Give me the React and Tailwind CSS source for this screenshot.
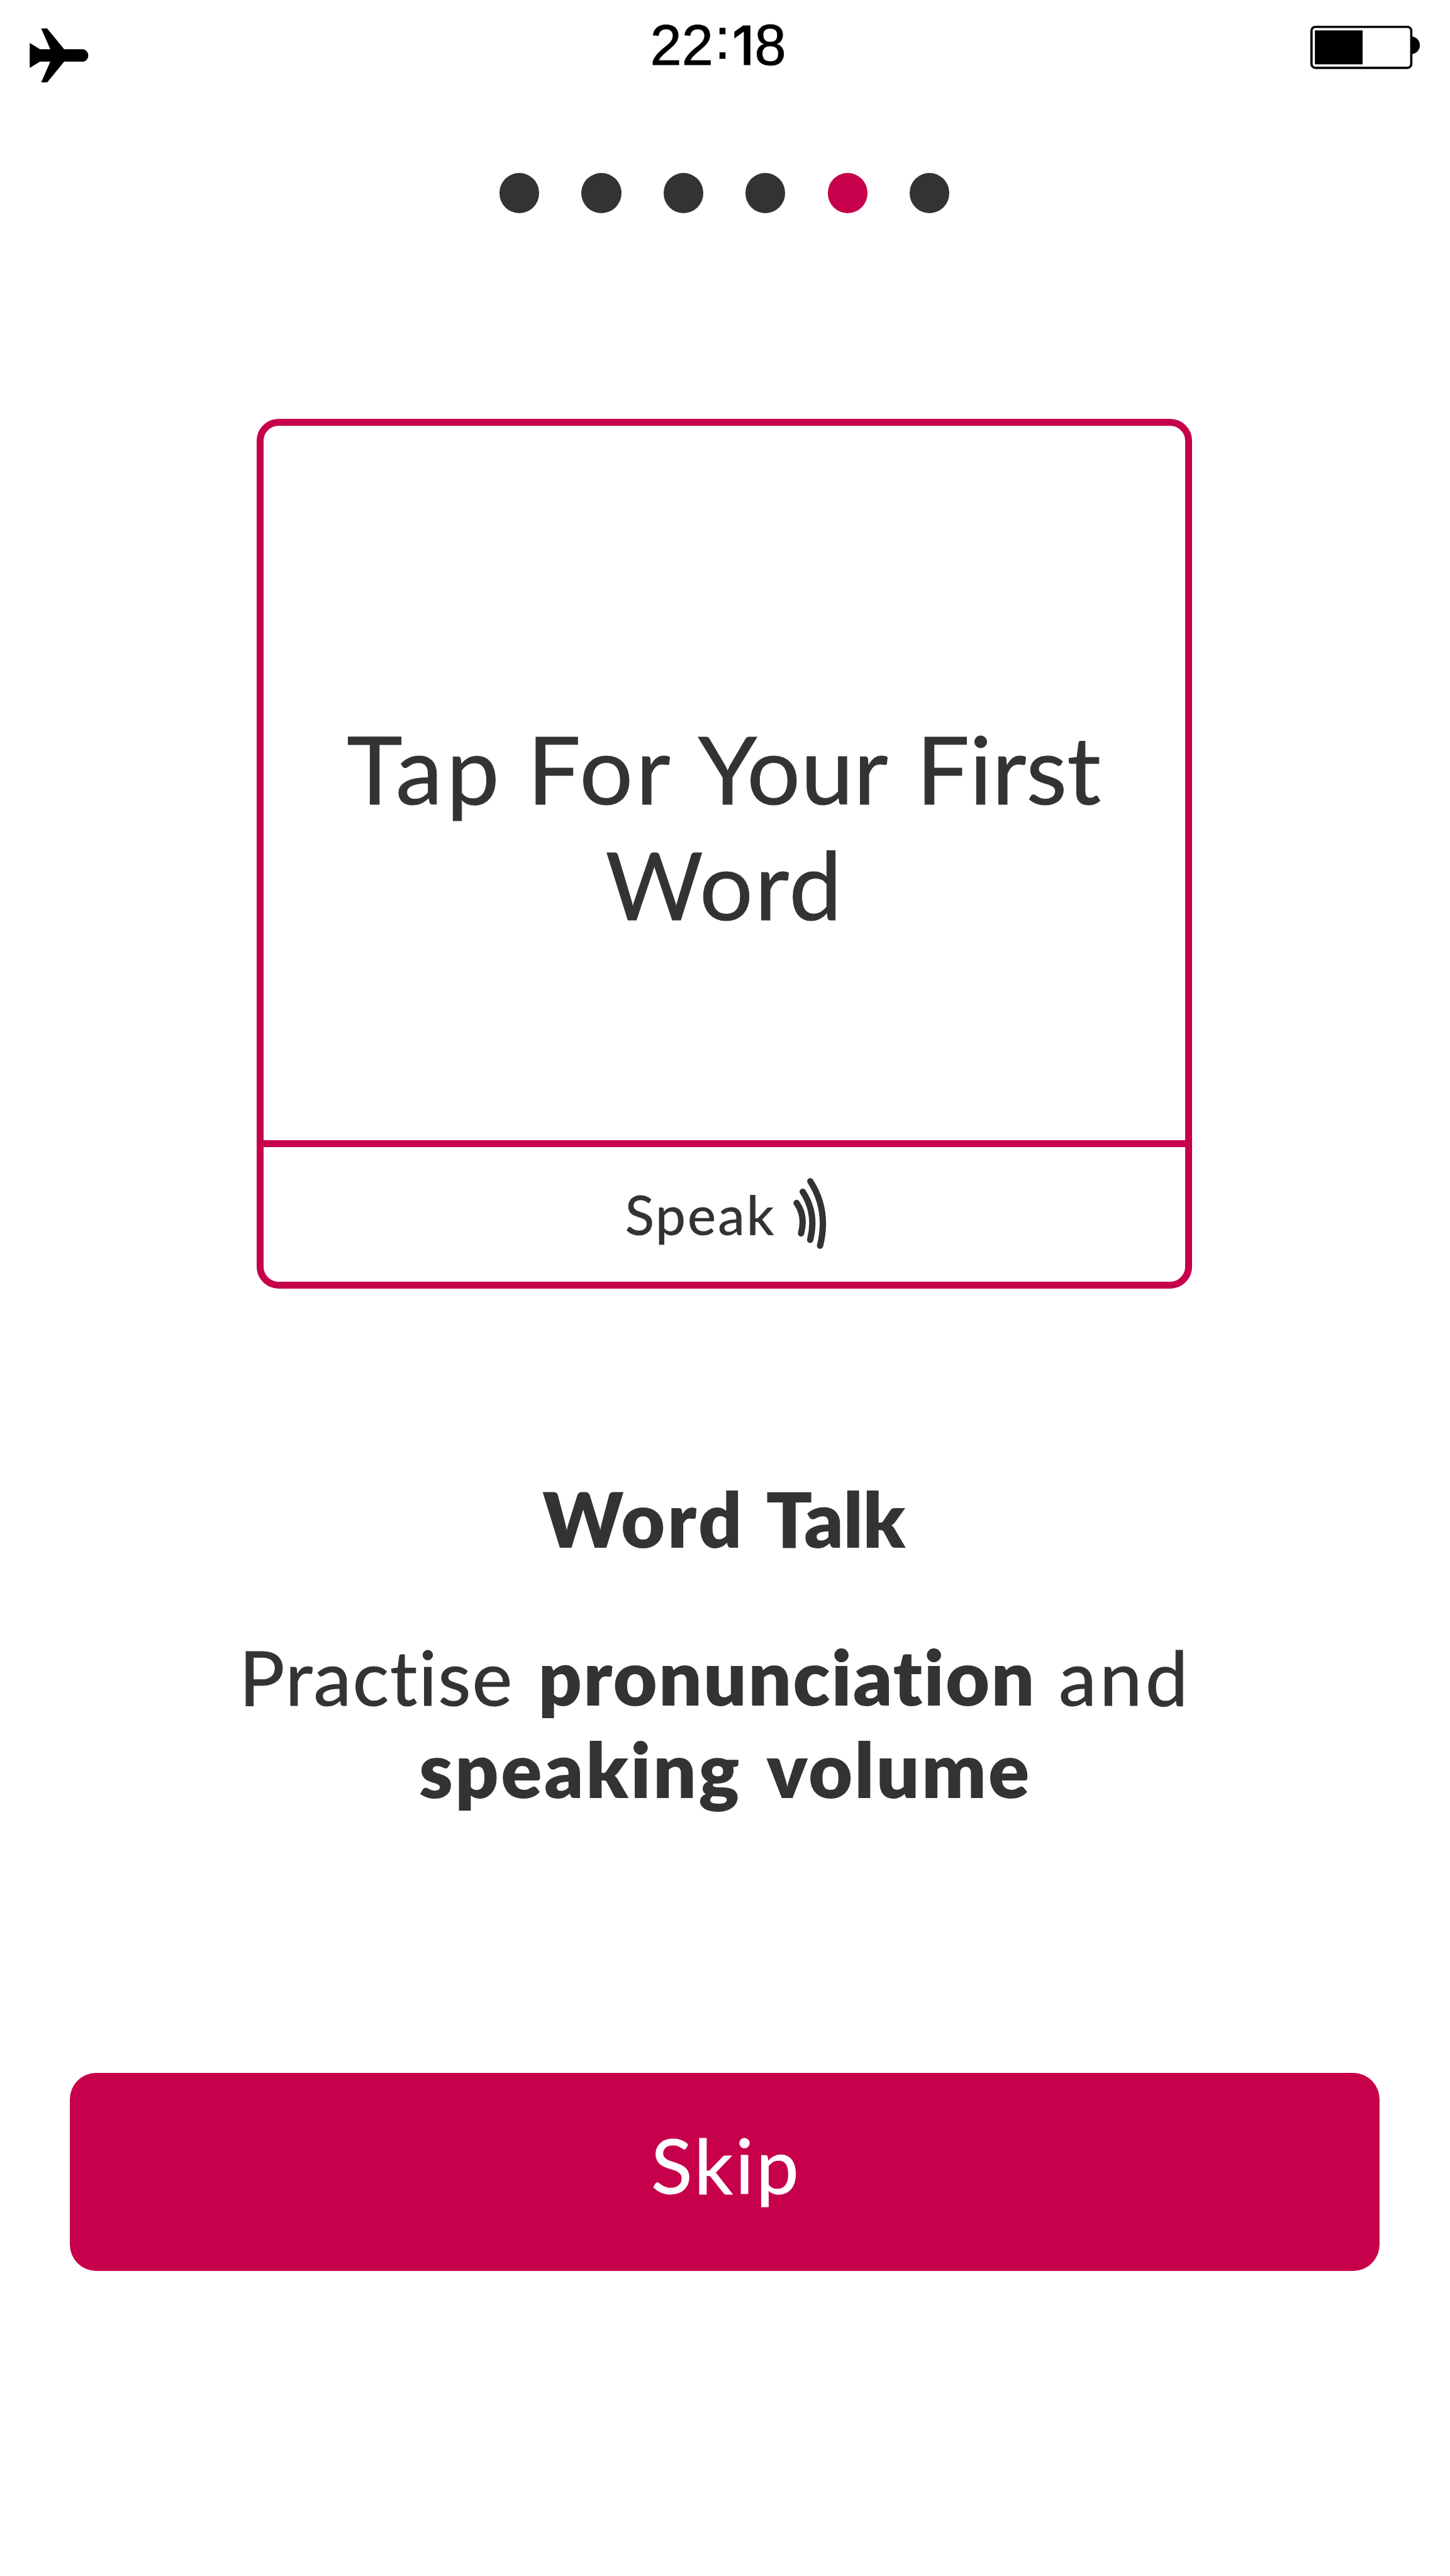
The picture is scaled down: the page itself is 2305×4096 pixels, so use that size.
import React from 'react';

function Airplane() {
  return (
    <svg viewBox="55 51.8 108.5 100" className="ml-[47.4px] mt-[44.7px] h-[86.3px] w-[93.6px]" fill="#000">
      <path d="M55.3 78.7 74.2 90.2H93.2L76.4 52H87.4L118.8 90.2H152C158.5 90.2 163.2 95.5 163.2 101.8S158.5 113.3 152 113.3H118.8L87.4 151.6H76.4L93.2 113.3H74.2L55.3 124.9Z" />
    </svg>
  );
}

function Battery() {
  return (
    <svg viewBox="2414 48 202 80" className="mr-[47.5px] mt-[41.4px] h-[69px] w-[174.3px]">
      <circle cx="2599.5" cy="84" r="16.3" />
      <rect x="2416.1" y="50.1" width="183.9" height="75.4" rx="7" fill="#fff" stroke="#000" strokeWidth="4.2" />
      <rect x="2422.3" y="56.5" width="88" height="62.6" />
    </svg>
  );
}

function SoundWaves() {
  return (
    <svg
      viewBox="1080 270 190 400"
      className="mt-[48.3px] h-[115px] w-[54.6px]"
      fill="none"
      stroke="#333"
      strokeWidth="35"
      strokeLinecap="round"
    >
      <path d="M1102 412C1131 452 1145 510 1127 580" />
      <path d="M1136 350C1182 420 1204 510 1177 616" />
      <path d="M1178 292C1241 390 1267 505 1232 648" />
    </svg>
  );
}

const dots = [false, false, false, false, true, false];

export default function App() {
  return (
    <div className="flex h-[4096px] w-[2305px] flex-col overflow-hidden bg-white font-['Lato',sans-serif] whitespace-pre text-[#333]">
      <header className="flex h-[275.3px] shrink-0 items-start justify-between">
        <Airplane />
        <div className="ml-[61px] mt-[21.8px] flex h-[100px] w-[218px] items-baseline font-['Liberation_Sans',sans-serif] text-[90px] leading-[100px] text-black [-webkit-text-stroke:1px]">
          <span className="w-[100px]">22</span>
          <span className="relative -top-[10px] w-[30px] text-center">:</span>
          <span className="w-[36px] text-center font-['Inter',sans-serif] text-[84.6px] font-medium">1</span>
          <span className="w-[50px]">8</span>
        </div>
        <Battery />
      </header>

      <nav className="ml-[794px] flex gap-[67.1px]">
        {dots.map((active, i) => (
          <span key={i} className={`size-[63.3px] rounded-full ${active ? 'bg-[#c6004b]' : 'bg-[#333]'}`} />
        ))}
      </nav>

      <section className="mt-[327px] ml-[408px] flex h-[1383px] w-[1487px] shrink-0 flex-col rounded-[35px] border-[11px] border-[#c6004b]">
        <div className="h-[1136.5px] pt-[452.5px] text-[150px] leading-[184px] [-webkit-text-stroke:1px]">
          <p className="flex pl-[132.3px]">
            <span className="w-[287px] tracking-[6.2px]">Tap </span>
            <span className="w-[271.4px] tracking-[4.7px]">For </span>
            <span className="w-[346.9px] tracking-[0.5px]">Your </span>
            <span>First</span>
          </p>
          <p className="pl-[543.4px] tracking-[2.8px]">Word</p>
        </div>
        <div className="flex grow items-start border-t-[11px] border-[#c6004b] pl-[574.4px]">
          <span className="mt-[54.8px] w-[266.4px] text-[86px] leading-[104px] font-medium tracking-[2.6px]">Speak</span>
          <SoundWaves />
        </div>
      </section>

      <h1 className="mt-[292.3px] flex pl-[862.4px] text-[121px] leading-[147px] font-extrabold">
        <span className="w-[355.3px] tracking-[3.7px]">Word </span>
        <span className="tracking-[-0.3px]">Talk</span>
      </h1>

      <div className="mt-[104px] text-[121px] leading-[147px]">
        <p className="flex pl-[380px]">
          <span className="w-[475.4px] tracking-[1.9px] [-webkit-text-stroke:1px]">Practise </span>
          <strong className="w-[827.6px] font-extrabold tracking-[2.2px]">pronunciation </strong>
          <span className="tracking-[5px] [-webkit-text-stroke:1px]">and</span>
        </p>
        <p className="flex pl-[665.9px] font-extrabold">
          <span className="w-[552.8px] tracking-[3.5px]">speaking </span>
          <span className="tracking-[3.1px]">volume</span>
        </p>
      </div>

      <button className="mt-[409.7px] ml-[111px] flex h-[315.7px] w-[2082px] shrink-0 items-start rounded-[42px] bg-[#c6004b] pt-[72.2px] pl-[924px] text-[121px] leading-[147px] tracking-[4px] text-white [-webkit-text-stroke:1px]">
        Skip
      </button>
    </div>
  );
}
